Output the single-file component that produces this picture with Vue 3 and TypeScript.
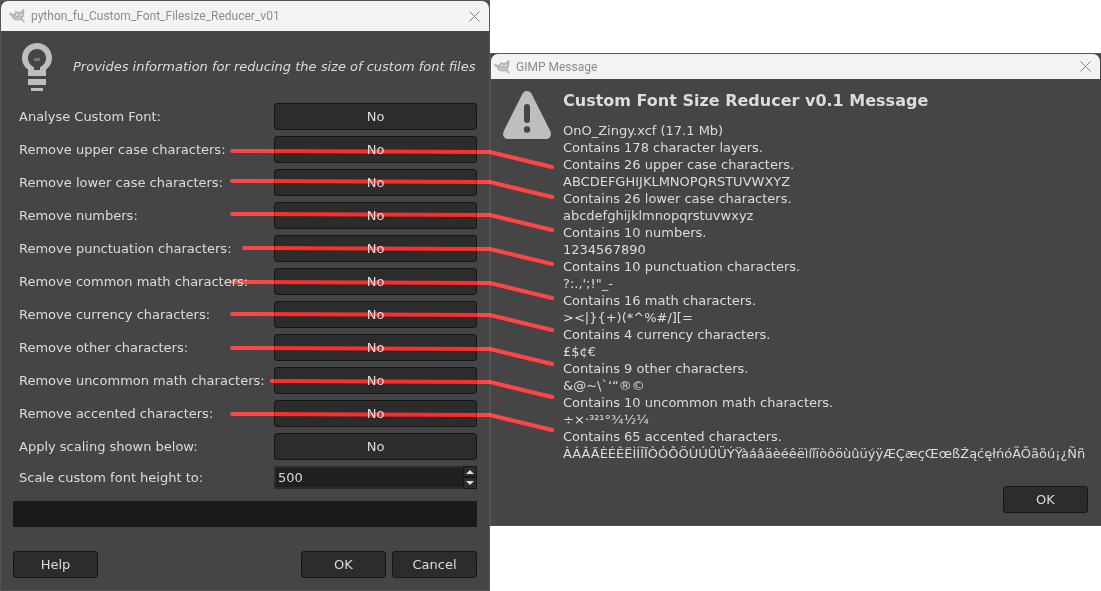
<script setup lang="ts">
import { ref } from 'vue'

interface Option {
  id: string
  label: string
  value: boolean
}

const options = ref<Option[]>([
  { id: 'analyse', label: 'Analyse Custom Font:', value: false },
  { id: 'upper', label: 'Remove upper case characters:', value: false },
  { id: 'lower', label: 'Remove lower case characters:', value: false },
  { id: 'numbers', label: 'Remove numbers:', value: false },
  { id: 'punctuation', label: 'Remove punctuation characters:', value: false },
  { id: 'math', label: 'Remove common math characters:', value: false },
  { id: 'currency', label: 'Remove currency characters:', value: false },
  { id: 'other', label: 'Remove other characters:', value: false },
  { id: 'uncommon', label: 'Remove uncommon math characters:', value: false },
  { id: 'accented', label: 'Remove accented characters:', value: false },
  { id: 'scaling', label: 'Apply scaling shown below:', value: false },
])

const height = ref('500')

const step = (delta: number): void => {
  height.value = String((Number(height.value) || 0) + delta)
}

const messageLines: string[] = [
  'OnO_Zingy.xcf (17.1 Mb)',
  'Contains 178 character layers.',
  'Contains 26 upper case characters.',
  'ABCDEFGHIJKLMNOPQRSTUVWXYZ',
  'Contains 26 lower case characters.',
  'abcdefghijklmnopqrstuvwxyz',
  'Contains 10 numbers.',
  '1234567890',
  'Contains 10 punctuation characters.',
  '?:.,\';!"_-',
  'Contains 16 math characters.',
  '><|}{+)(*^%#/][=',
  'Contains 4 currency characters.',
  '£$¢€',
  'Contains 9 other characters.',
  '&@~\\`‘“®©',
  'Contains 10 uncommon math characters.',
  '÷×·³²¹°¾½¼',
  'Contains 65 accented characters.',
  'ÀÁÂÄÈÉÊËÌÍÎÏÒÓÔÖÙÚÛÜÝŸàáâäèéêëìíîïòôöùûüýÿÆÇæçŒœßŻąćęłńóÃÕãõú¡¿Ññ',
]

// Each connector runs from an option row, bends at the window edge and ends at its message line.
const connectors: { x: number; y: number }[] = [
  { x: 232, y: 151 },
  { x: 232, y: 181 },
  { x: 232, y: 214 },
  { x: 244, y: 248 },
  { x: 232, y: 282 },
  { x: 232, y: 314 },
  { x: 232, y: 348 },
  { x: 272, y: 381 },
  { x: 232, y: 414 },
]
const linePath = (c: { x: number; y: number }): string =>
  `M${c.x} ${c.y}L490 ${c.y + 1}L552 ${c.y + 16}`

const wilberHead =
  'M0 5L2 4.6L3.2 6L5.4 5.6L6.4 4.6L5.8 2.2L7.4 3.6L10 4L12 3.4L14.6 0.4L15.4 3L15 7.4L13.8 10L14 12L15.6 12.8L15.4 14.8L13.6 13.8L12.2 12L9 12.6L5.4 12L3 10L2.6 8L0.6 7Z'
</script>

<template>
  <main class="desktop">
    <section class="window reducer" aria-labelledby="reducer-title">
      <header class="titlebar tall">
        <svg class="wilber" viewBox="0 0 16 16" aria-hidden="true">
          <path :d="wilberHead" />
          <path class="eye" d="M7 5.4H9.4V8H7ZM10.8 5.4H13.2V8H10.800Z" />
          <path d="M8 6.200H9V7.400H8ZM11.600 6.200H12.600V7.400H11.600Z" />
          <path d="M5 9L8 10.400L12.400 9.800" class="mouth" />
        </svg>
        <h1 id="reducer-title">python_fu_Custom_Font_Filesize_Reducer_v01</h1>
        <button class="close" type="button" aria-label="Close">
          <svg viewBox="0 0 11 11"><path d="M0.5 0.5L10.5 10.5M10.5 0.5L0.5 10.5" /></svg>
        </button>
      </header>

      <form class="body" @submit.prevent>
        <div class="intro">
          <svg class="bulb" viewBox="0 0 48 48" aria-hidden="true">
            <path fill-rule="evenodd" d="M24 0C15.500 0 9 6.700 9 15C9 20.200 11.300 23.500 15 26.600V33H33V26.600C36.700 23.500 39 20.200 39 15C39 6.700 32.500 0 24 0ZM24 6C29.200 6 33 10 33 15C33 19.500 30.500 22.300 27 24.200V27H21V24.200C17.500 22.300 15 19.500 15 15C15 10 18.800 6 24 6Z" />
            <path d="M15 36H33V42H15ZM18 45H30V48H18Z" />
            <path class="dim" d="M21 15H27V18H21Z" />
          </svg>
          <p>Provides information for reducing the size of custom font files</p>
        </div>

        <div class="fields">
          <div v-for="o in options" :key="o.id" class="field">
            <label :for="o.id">{{ o.label }}</label>
            <button :id="o.id" class="btn" type="button" @click="o.value = !o.value">
              {{ o.value ? 'Yes' : 'No' }}
            </button>
          </div>
          <div class="field">
            <label for="height">Scale custom font height to:</label>
            <div class="spin">
              <input id="height" v-model="height" type="text" inputmode="numeric" />
              <div class="arrows">
                <button type="button" aria-label="Increase" @click="step(1)">
                  <svg viewBox="0 0 8 4"><path d="M0 4L4 0L8 4Z" /></svg>
                </button>
                <button type="button" aria-label="Decrease" @click="step(-1)">
                  <svg viewBox="0 0 8 4"><path d="M0 0L4 4L8 0Z" /></svg>
                </button>
              </div>
            </div>
          </div>
        </div>

        <div class="progress"></div>

        <footer class="actions">
          <button class="btn help" type="button">Help</button>
          <button class="btn" type="submit">OK</button>
          <button class="btn" type="button">Cancel</button>
        </footer>
      </form>
    </section>

    <section class="window message" aria-labelledby="message-title">
      <header class="titlebar">
        <svg class="wilber" viewBox="0 0 16 16" aria-hidden="true">
          <path :d="wilberHead" />
          <path class="eye" d="M7 5.4H9.4V8H7ZM10.8 5.4H13.2V8H10.800Z" />
          <path d="M8 6.200H9V7.400H8ZM11.600 6.200H12.600V7.400H11.600Z" />
          <path d="M5 9L8 10.400L12.400 9.800" class="mouth" />
        </svg>
        <h1 id="message-title">GIMP Message</h1>
        <button class="close" type="button" aria-label="Close">
          <svg viewBox="0 0 11 11"><path d="M0.5 0.5L10.5 10.5M10.5 0.5L0.5 10.5" /></svg>
        </button>
      </header>
      <div class="body">
        <div class="notice">
          <svg class="warning" viewBox="0 0 48 48" aria-hidden="true">
            <path d="M24 0C21.800 0 20.300 1.200 19.200 3.200L1 39.500C-1 43.800 0.300 48 4.500 48H43.500C47.700 48 49 43.800 47 39.500L28.800 3.200C27.700 1.200 26.200 0 24 0Z" />
            <rect class="hole" x="21" y="13" width="6" height="19" rx="3" />
            <circle class="hole" cx="24" cy="38.500" r="3.200" />
          </svg>
          <div>
            <h2>Custom Font Size Reducer v0.1 Message</h2>
            <p v-for="line in messageLines" :key="line">{{ line }}</p>
          </div>
        </div>
        <footer class="actions">
          <button class="btn" type="button">OK</button>
        </footer>
      </div>
    </section>

    <svg class="connectors" aria-hidden="true">
      <path v-for="c in connectors" :key="c.y" :d="linePath(c)" />
    </svg>
  </main>
</template>

<style>
body {
  margin: 0;
  background: #fff;
}
</style>

<style scoped>
.desktop {
  position: relative;
  isolation: isolate;
  display: flex;
  align-items: flex-start;
  background: #fff;
  color: #dcdcdc;
  font: 13px/17px 'DejaVu Sans', sans-serif;
}

h1,
h2,
p {
  margin: 0;
}

button,
input {
  box-sizing: border-box;
  margin: 0;
  padding: 0;
  color: inherit;
  font: inherit;
}

.window {
  box-sizing: border-box;
  border: 1px solid #555;
  background: #454545;
}

.reducer {
  flex: 0 0 490px;
}

.message {
  flex: 1;
  min-width: 0;
  margin-top: 53px;
  border-right-color: #454545;
}

.titlebar {
  display: flex;
  align-items: center;
  height: 25px;
  padding: 0 9px 0 3px;
  border-radius: 7px 7px 0 0;
  background: #f3f3f3;
  color: #8c8c8c;
}

.titlebar.tall {
  height: 30px;
  padding-left: 8px;
}

.titlebar h1 {
  flex: 1;
  margin-left: 6px;
  font: 12px/16px Roboto, 'Open Sans', sans-serif;
}

.wilber {
  width: 16px;
  height: 16px;
  fill: #b4b4b4;
}

.wilber .eye {
  fill: #e4e4e4;
}

.wilber .mouth {
  fill: none;
  stroke: #d8d8d8;
}

.close {
  display: flex;
  border: 0;
  background: none;
}

.close svg {
  width: 11px;
  height: 11px;
  fill: none;
  stroke: #808080;
}

.body {
  padding: 12px;
}

.intro {
  display: flex;
  align-items: center;
  gap: 12px;
  font-style: italic;
  white-space: nowrap;
}

.intro p {
  padding-bottom: 2px;
}

.bulb,
.warning {
  flex: none;
  width: 48px;
  height: 48px;
  fill: #bebebe;
}

.bulb .dim {
  fill: #777;
}

.warning .hole {
  fill: #454545;
}

.fields {
  display: grid;
  gap: 6px;
  margin-top: 12px;
}

.field {
  display: grid;
  grid-template-columns: 1fr 203px;
  align-items: center;
  padding-left: 6px;
}

.btn {
  min-width: 85px;
  height: 27px;
  border: 1px solid #151515;
  border-radius: 3px;
  background: #2c2c2c;
}

.spin {
  display: flex;
  height: 23px;
  background: #1f1f1f;
}

.spin input {
  flex: 1;
  min-width: 0;
  padding: 0 2px;
  border: 2px solid #2c2c2c;
  border-right: 0;
  outline: 0;
  background: #1f1f1f;
}

.arrows {
  display: grid;
  grid-template-rows: 11px 12px;
  width: 14px;
}

.arrows button {
  display: flex;
  align-items: center;
  justify-content: center;
  border: 1px solid #151515;
  background: #2c2c2c;
}

.arrows svg {
  width: 8px;
  height: 4px;
  fill: #dcdcdc;
}

.progress {
  height: 26px;
  margin-top: 12px;
  background: #1a1a1a;
}

.actions {
  display: flex;
  justify-content: flex-end;
  gap: 6px;
  margin-top: 24px;
}

.help {
  margin-right: auto;
}

.notice {
  display: flex;
  gap: 12px;
  white-space: nowrap;
}

.notice h2 {
  margin-bottom: 12px;
  font-size: 16px;
  line-height: 19px;
}

.connectors {
  position: absolute;
  inset: 0;
  width: 100%;
  height: 100%;
  fill: none;
  stroke: #f00;
  stroke-width: 4px;
  stroke-linecap: round;
  stroke-linejoin: round;
  mix-blend-mode: lighten;
  pointer-events: none;
}
</style>
